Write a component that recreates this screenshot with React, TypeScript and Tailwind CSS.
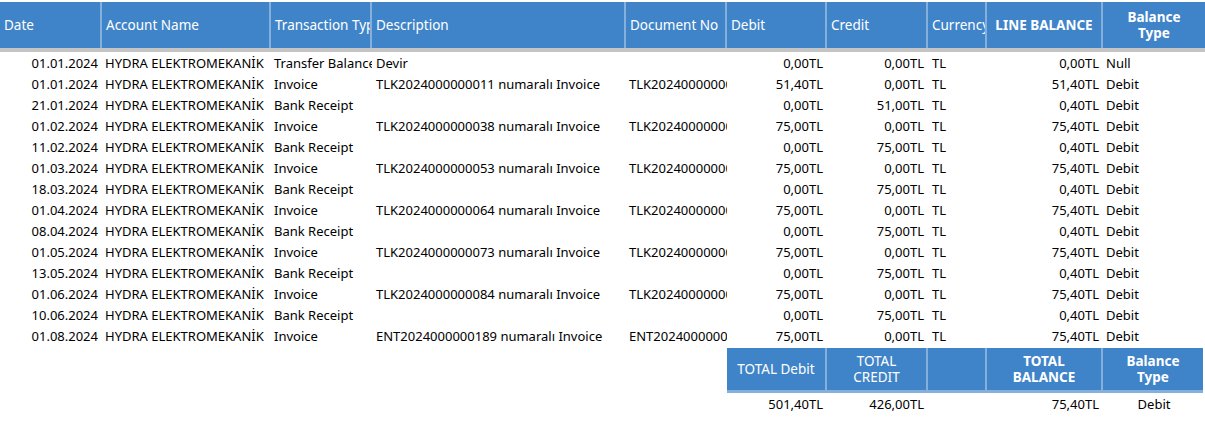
const W = ["w-[102px]","w-[169px]","w-[101px]","w-[254px]","w-[101px]","w-[100px]","w-[101px]","w-[59px]","w-[116px]","w-[102px]"];
const rows: string[][] = [
["01.01.2024","Transfer Balance","Devir","","0,00TL","0,00TL","0,00TL","Null"],
["01.01.2024","Invoice","TLK2024000000011 numaralı Invoice","TLK2024000000011","51,40TL","0,00TL","51,40TL","Debit"],
["21.01.2024","Bank Receipt","","","0,00TL","51,00TL","0,40TL","Debit"],
["01.02.2024","Invoice","TLK2024000000038 numaralı Invoice","TLK2024000000038","75,00TL","0,00TL","75,40TL","Debit"],
["11.02.2024","Bank Receipt","","","0,00TL","75,00TL","0,40TL","Debit"],
["01.03.2024","Invoice","TLK2024000000053 numaralı Invoice","TLK2024000000053","75,00TL","0,00TL","75,40TL","Debit"],
["18.03.2024","Bank Receipt","","","0,00TL","75,00TL","0,40TL","Debit"],
["01.04.2024","Invoice","TLK2024000000064 numaralı Invoice","TLK2024000000064","75,00TL","0,00TL","75,40TL","Debit"],
["08.04.2024","Bank Receipt","","","0,00TL","75,00TL","0,40TL","Debit"],
["01.05.2024","Invoice","TLK2024000000073 numaralı Invoice","TLK2024000000073","75,00TL","0,00TL","75,40TL","Debit"],
["13.05.2024","Bank Receipt","","","0,00TL","75,00TL","0,40TL","Debit"],
["01.06.2024","Invoice","TLK2024000000084 numaralı Invoice","TLK2024000000084","75,00TL","0,00TL","75,40TL","Debit"],
["10.06.2024","Bank Receipt","","","0,00TL","75,00TL","0,40TL","Debit"],
["01.08.2024","Invoice","ENT2024000000189 numaralı Invoice","ENT2024000000189","75,00TL","0,00TL","75,40TL","Debit"],
];
const hf = "font-['Open_Sans']";
export default function App() {
  const heads = ["Date","Account Name","Transaction Type","Description","Document No","Debit","Credit","Currency"];
  return (
    <div className="w-[1205px] h-[438px] bg-white overflow-hidden font-['Liberation_Sans'] text-[13px] text-black">
      <div className="h-[2px]" />
      <div className={`flex h-[46px] bg-[#3f84c8] text-white text-[13.5px] ${hf}`}>
        {heads.map((h,i)=>(
          <div key={i} className={`${W[i]} shrink-0 border-r-2 border-[#86b0dc] flex items-center pl-[4px] overflow-hidden whitespace-nowrap`}>{h}</div>
        ))}
        <div className={`${W[8]} shrink-0 border-r-2 border-[#86b0dc] flex items-center justify-center font-bold`}>LINE BALANCE</div>
        <div className={`${W[9]} shrink-0 flex items-center justify-center text-center font-bold leading-[16px]`}>Balance<br/>Type</div>
      </div>
      <div className="h-[4px] bg-[#c4c4c4]" />
      <div className="pt-[1px]">
        {rows.map((r,i)=>(
          <div key={i} className="flex h-[21px] items-center whitespace-nowrap">
            <div className={`${W[0]} shrink-0 text-right pr-[4px]`}>{r[0]}</div>
            <div className={`${W[1]} shrink-0 pl-[3px] overflow-hidden`}>HYDRA ELEKTROMEKANİK</div>
            <div className={`${W[2]} shrink-0 pl-[3px] overflow-hidden`}>{r[1]}</div>
            <div className={`${W[3]} shrink-0 pl-[4px] overflow-hidden`}>{r[2]}</div>
            <div className={`${W[4]} shrink-0 pl-[3px] overflow-hidden`}>{r[3]}</div>
            <div className={`${W[5]} shrink-0 text-right pr-[4px]`}>{r[4]}</div>
            <div className={`${W[6]} shrink-0 text-right pr-[4px]`}>{r[5]}</div>
            <div className={`${W[7]} shrink-0 pl-[4px]`}>TL</div>
            <div className={`${W[8]} shrink-0 text-right pr-[4px]`}>{r[6]}</div>
            <div className={`${W[9]} shrink-0 pl-[3px]`}>{r[7]}</div>
          </div>
        ))}
      </div>
      <div className="flex pl-[727px] mt-[1px]">
        <div className={`flex h-[45px] bg-[#3f84c8] text-white text-[13.5px] leading-[16px] ${hf} border-b-[3px] border-[#86b0dc]`}>
          <div className={`${W[5]} border-r-2 border-[#86b0dc] flex items-center justify-center`}>TOTAL Debit</div>
          <div className={`${W[6]} border-r-2 border-[#86b0dc] flex items-center justify-center text-center`}>TOTAL<br/>CREDIT</div>
          <div className={`${W[7]} border-r-2 border-[#86b0dc]`} />
          <div className={`${W[8]} border-r-2 border-[#86b0dc] flex items-center justify-center text-center font-bold`}>TOTAL<br/>BALANCE</div>
          <div className="w-[100px] flex items-center justify-center text-center font-bold">Balance<br/>Type</div>
        </div>
      </div>
      <div className="flex pl-[727px] h-[24px] items-center">
        <div className={`${W[5]} text-right pr-[4px]`}>501,40TL</div>
        <div className={`${W[6]} text-right pr-[4px]`}>426,00TL</div>
        <div className={W[7]} />
        <div className={`${W[8]} text-right pr-[4px]`}>75,40TL</div>
        <div className={`${W[9]} text-center`}>Debit</div>
      </div>
    </div>
  );
}
